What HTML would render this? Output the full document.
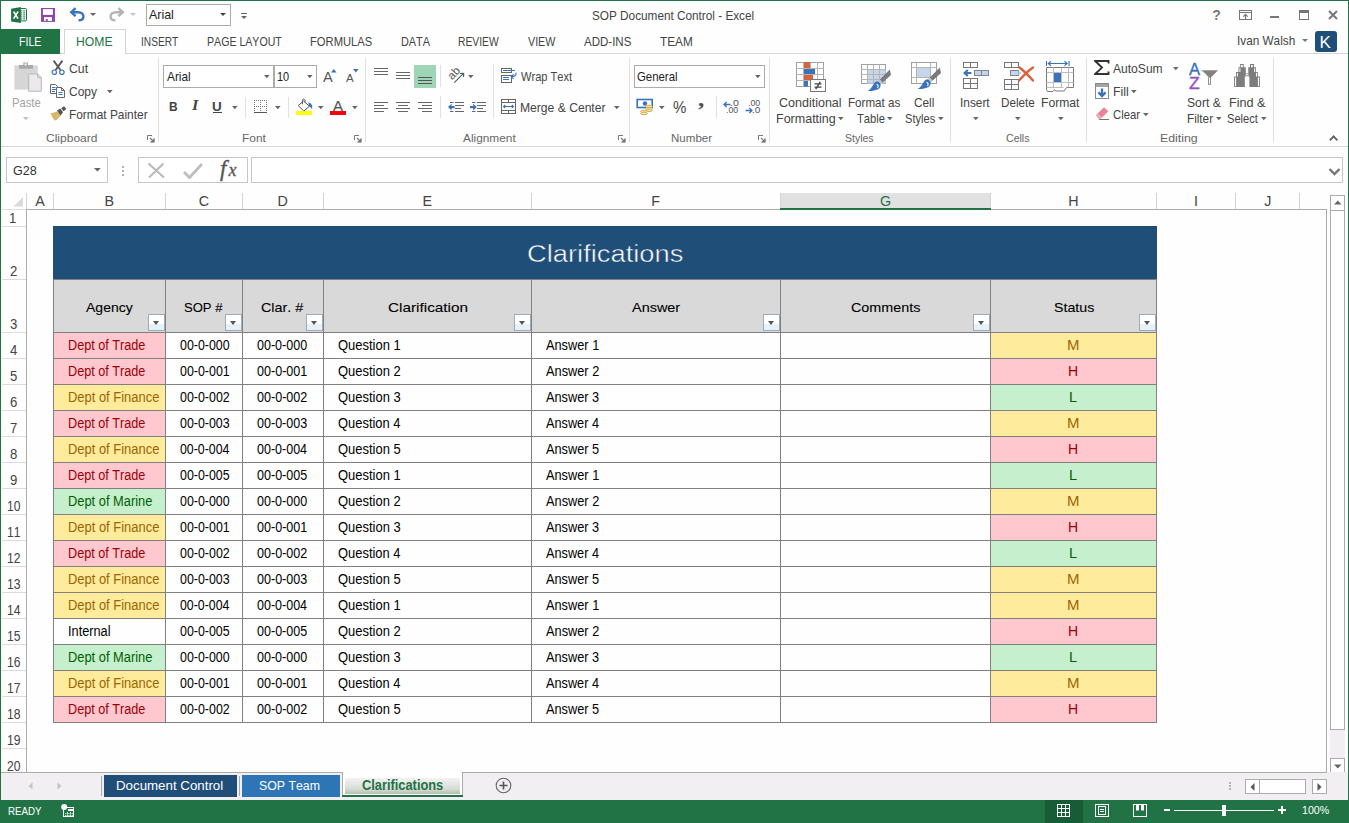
<!DOCTYPE html>
<html><head><meta charset="utf-8"><title>SOP Document Control - Excel</title>
<style>
*{box-sizing:border-box;margin:0;padding:0}
html,body{width:1349px;height:823px;overflow:hidden;background:#fdfefd}
body{font-family:"Liberation Sans",sans-serif;font-size:12px;color:#444;position:relative}
.a{position:absolute}
.t{position:absolute;white-space:nowrap;line-height:1;font-kerning:none}
#frame{left:0;top:0;width:1349px;height:823px;border-top:1px solid #217346;border-left:1px solid #217346;border-right:1px solid #217346;z-index:50}
.dd{position:absolute;width:0;height:0;border-left:3px solid transparent;border-right:3px solid transparent;border-top:3px solid #666}
.fb{position:absolute;top:314px;width:17px;height:17px;background:linear-gradient(#fff 58%,#e6f2fb 58%);border:1px solid #a3abb2}
.fb:after{content:"";position:absolute;left:4px;top:6px;border-left:3.5px solid transparent;border-right:3.5px solid transparent;border-top:4px solid #555}

</style></head><body>
<div id="frame" class="a"></div>
<div id="titlebar">
<svg class="a" style="left:11px;top:7px" width="17" height="17" viewBox="0 0 17 17">
<rect x="8.5" y="1.5" width="7" height="12.4" rx="1" fill="#fff" stroke="#217346" stroke-width="1"/>
<path d="M10 3.9h1.3M10 5.9h1.3M10 7.9h1.3M10 9.9h1.3M10 11.9h1.3M12.2 3.9h2M12.2 5.9h2M12.2 7.9h2M12.2 9.9h2M12.2 11.9h2" stroke="#217346" stroke-width="1" fill="none"/>
<path d="M0.1 1.7L9.9 0.1V15.9L0.1 14.6Z" fill="#217346"/>
<path d="M2.7 4.6L7 11.6M7 4.6L2.7 11.6" stroke="#fff" stroke-width="1.7" fill="none"/>
</svg>
<svg class="a" style="left:41px;top:8px" width="14" height="14" viewBox="0 0 14 14">
<rect x="0" y="0" width="14" height="13.9" fill="#8a48a8"/>
<rect x="1.9" y="1.1" width="10" height="5.8" fill="#fff"/>
<rect x="3" y="9.1" width="8" height="3.8" fill="#fff"/>
<rect x="4.8" y="11.1" width="2" height="1.8" fill="#8a48a8"/>
</svg>
<svg class="a" style="left:69px;top:7px" width="17" height="15" viewBox="0 0 17 15">
<path d="M2.2 5.2 H9.2 C12.6 5.2 14.4 7.2 14.4 9.4 C14.4 11.6 12.6 13.2 9.6 13.2" fill="none" stroke="#3a73ba" stroke-width="2.4"/>
<path d="M6.6 1.2 L2.2 5.2 L6.6 9.2" fill="none" stroke="#3a73ba" stroke-width="2.4"/>
</svg>
<div class="dd" style="left:90px;top:13px;border-top-color:#666"></div>
<svg class="a" style="left:108px;top:7px" width="17" height="15" viewBox="0 0 17 15">
<g transform="translate(17,0) scale(-1,1)">
<path d="M2.2 5.2 H9.2 C12.6 5.2 14.4 7.2 14.4 9.4 C14.4 11.6 12.6 13.2 9.6 13.2" fill="none" stroke="#b4b4b4" stroke-width="2.4"/>
<path d="M6.6 1.2 L2.2 5.2 L6.6 9.2" fill="none" stroke="#b4b4b4" stroke-width="2.4"/>
</g></svg>
<div class="dd" style="left:130px;top:13px;border-top-color:#c4c4c4"></div>
<div class="a" style="left:146px;top:4px;width:85px;height:22px;border:1px solid #ababab;background:#fff"></div>
<div class="t" style="left:148.98px;top:8px;font-size:13.2px;color:#222;transform:scaleX(0.9413);transform-origin:0 0;">Arial</div>
<div class="dd" style="left:220px;top:13px;border-top-color:#444"></div>
<div class="a" style="left:241px;top:13px;width:6px;height:1px;background:#666"></div>
<div class="dd" style="left:241px;top:16px;border-top-color:#666"></div>
<div class="t" style="left:592.47px;top:10px;font-size:12.7px;color:#444;transform:scaleX(0.9273);transform-origin:0 0;">SOP Document Control - Excel</div>
<div class="t" style="left:1212.36px;top:8px;font-size:14px;color:#777;font-weight:bold;">?</div>
<svg class="a" style="left:1239px;top:10px" width="13" height="10" viewBox="0 0 13 10">
<rect x="0.5" y="0.5" width="12" height="9" fill="none" stroke="#777"/>
<path d="M0.5 2.5H12.5" stroke="#777"/>
<path d="M6.5 9V4.4M4.3 6.6L6.5 4.4L8.7 6.6" fill="none" stroke="#777" stroke-width="1.2"/>
</svg>
<div class="a" style="left:1270px;top:16px;width:9px;height:2px;background:#777"></div>
<div class="a" style="left:1299px;top:10px;width:10px;height:10px;border:1px solid #777;border-top-width:3px"></div>
<svg class="a" style="left:1328px;top:10px" width="10" height="10" viewBox="0 0 10 10">
<path d="M1 1L9 9M9 1L1 9" stroke="#777" stroke-width="2" fill="none"/></svg>
<div class="a" style="left:1px;top:29px;width:59px;height:25px;background:#217346"></div>
<div class="a" style="left:1px;top:53px;width:1347px;height:1px;background:#d5d5d5"></div>
<div class="a" style="left:1px;top:53px;width:59px;height:1px;background:#217346"></div>
<div class="a" style="left:64px;top:29px;width:62px;height:25px;background:#fff;border:1px solid #d5d5d5;border-bottom:0"></div>
<div class="t" style="left:19.13px;top:35px;font-size:13px;color:#fff;transform:scaleX(0.8131);transform-origin:0 0;">FILE</div>
<div class="t" style="left:76.00px;top:35px;font-size:13px;color:#217346;transform:scaleX(0.9365);transform-origin:0 0;">HOME</div>
<div class="t" style="left:140.56px;top:35px;font-size:13px;color:#444;transform:scaleX(0.7797);transform-origin:0 0;">INSERT</div>
<div class="t" style="left:206.63px;top:35px;font-size:13px;color:#444;transform:scaleX(0.8154);transform-origin:0 0;">PAGE LAYOUT</div>
<div class="t" style="left:310.48px;top:35px;font-size:13px;color:#444;transform:scaleX(0.8616);transform-origin:0 0;">FORMULAS</div>
<div class="t" style="left:400.71px;top:35px;font-size:13px;color:#444;transform:scaleX(0.8368);transform-origin:0 0;">DATA</div>
<div class="t" style="left:458.45px;top:35px;font-size:13px;color:#444;transform:scaleX(0.7933);transform-origin:0 0;">REVIEW</div>
<div class="t" style="left:527.75px;top:35px;font-size:13px;color:#444;transform:scaleX(0.8242);transform-origin:0 0;">VIEW</div>
<div class="t" style="left:584.38px;top:35px;font-size:13px;color:#444;transform:scaleX(0.8859);transform-origin:0 0;">ADD-INS</div>
<div class="t" style="left:660.04px;top:35px;font-size:13px;color:#444;transform:scaleX(0.9064);transform-origin:0 0;">TEAM</div>
<div class="t" style="left:1237.21px;top:35px;font-size:12.2px;color:#444;transform:scaleX(0.9653);transform-origin:0 0;">Ivan Walsh</div>
<div class="dd" style="left:1302px;top:39px;border-top-color:#777"></div>
<div class="a" style="left:1315px;top:31px;width:22px;height:21px;background:#1f4e79;border-radius:3px"></div>
<div class="t" style="left:1319.61px;top:34px;font-size:17px;color:#fff;">K</div>
</div>
<div id="ribbon">
<div class="a" style="left:1px;top:146px;width:1347px;height:1px;background:#d5d5d5"></div>
<div class="a" style="left:158px;top:58px;width:1px;height:84px;background:#e1e1e1"></div>
<div class="a" style="left:365px;top:58px;width:1px;height:84px;background:#e1e1e1"></div>
<div class="a" style="left:629px;top:58px;width:1px;height:84px;background:#e1e1e1"></div>
<div class="a" style="left:769px;top:58px;width:1px;height:84px;background:#e1e1e1"></div>
<div class="a" style="left:950px;top:58px;width:1px;height:84px;background:#e1e1e1"></div>
<div class="a" style="left:1086px;top:58px;width:1px;height:84px;background:#e1e1e1"></div>
<div class="a" style="left:1273px;top:58px;width:1px;height:84px;background:#e1e1e1"></div>
<div class="t" style="left:45.99px;top:133px;font-size:11.4px;color:#666;transform:scaleX(1.0551);transform-origin:0 0;">Clipboard</div>
<div class="t" style="left:241.92px;top:133px;font-size:11.4px;color:#666;transform:scaleX(1.0462);transform-origin:0 0;">Font</div>
<div class="t" style="left:462.98px;top:133px;font-size:11.4px;color:#666;transform:scaleX(1.0398);transform-origin:0 0;">Alignment</div>
<div class="t" style="left:670.85px;top:133px;font-size:11.4px;color:#666;transform:scaleX(1.0147);transform-origin:0 0;">Number</div>
<div class="t" style="left:845.12px;top:133px;font-size:11.4px;color:#666;transform:scaleX(0.9198);transform-origin:0 0;">Styles</div>
<div class="t" style="left:1006.16px;top:133px;font-size:11.4px;color:#666;transform:scaleX(0.9282);transform-origin:0 0;">Cells</div>
<div class="t" style="left:1160.49px;top:133px;font-size:11.4px;color:#666;transform:scaleX(1.0818);transform-origin:0 0;">Editing</div>
<svg class="a" style="left:147px;top:135px" width="8" height="8" viewBox="0 0 8 8"><path d="M0.5 5V0.5H5" fill="none" stroke="#777"/><path d="M3 3L7 7M7 3.6V7H3.6" fill="none" stroke="#777" stroke-width="1.1"/><path d="M7.3 3.2V7.3H3.2Z" fill="#777"/></svg>
<svg class="a" style="left:354px;top:135px" width="8" height="8" viewBox="0 0 8 8"><path d="M0.5 5V0.5H5" fill="none" stroke="#777"/><path d="M3 3L7 7M7 3.6V7H3.6" fill="none" stroke="#777" stroke-width="1.1"/><path d="M7.3 3.2V7.3H3.2Z" fill="#777"/></svg>
<svg class="a" style="left:618px;top:135px" width="8" height="8" viewBox="0 0 8 8"><path d="M0.5 5V0.5H5" fill="none" stroke="#777"/><path d="M3 3L7 7M7 3.6V7H3.6" fill="none" stroke="#777" stroke-width="1.1"/><path d="M7.3 3.2V7.3H3.2Z" fill="#777"/></svg>
<svg class="a" style="left:758px;top:135px" width="8" height="8" viewBox="0 0 8 8"><path d="M0.5 5V0.5H5" fill="none" stroke="#777"/><path d="M3 3L7 7M7 3.6V7H3.6" fill="none" stroke="#777" stroke-width="1.1"/><path d="M7.3 3.2V7.3H3.2Z" fill="#777"/></svg>
<svg class="a" style="left:1329px;top:134px" width="10" height="8" viewBox="0 0 10 8"><path d="M0.8 6.4L4.6 2.4L8.4 6.4" fill="none" stroke="#666" stroke-width="2"/></svg>
<svg class="a" style="left:13px;top:61px" width="30" height="32" viewBox="0 0 30 32">
<rect x="1.4" y="4.4" width="23.4" height="24.2" fill="#d6d6d6"/>
<path d="M6 4H10.3V1.4H15V4H20V7.8H6Z" fill="#a9a9a9"/>
<rect x="11.4" y="2.4" width="2.6" height="2" fill="#e8e8e8"/>
<path d="M15.7 12.9H24.6L28.3 16.6V30.2H15.7Z" fill="#ebe8ee" stroke="#b8b8b8" stroke-width="1"/>
<path d="M24.6 12.9V16.6H28.3" fill="none" stroke="#b8b8b8" stroke-width="1"/>
</svg>
<div class="t" style="left:11.88px;top:97px;font-size:12.2px;color:#a6a6a6;transform:scaleX(0.9206);transform-origin:0 0;">Paste</div>
<svg class="a" style="left:23px;top:117px" width="6" height="4"><path d="M0 0H5.6L2.8 3.3Z" fill="#c0c0c0"/></svg>
<svg class="a" style="left:50px;top:60px" width="16" height="16" viewBox="0 0 16 16">
<path d="M3.6 0.6L10.4 10M12.4 0.6L5.6 10" stroke="#585858" stroke-width="1.9" fill="none"/>
<circle cx="4.3" cy="12.2" r="2.2" fill="#fff" stroke="#3a73ba" stroke-width="1.2"/>
<circle cx="11.9" cy="12.2" r="2.2" fill="#fff" stroke="#3a73ba" stroke-width="1.2"/>
</svg>
<div class="t" style="left:68.98px;top:63px;font-size:12.2px;color:#444;transform:scaleX(1.0068);transform-origin:0 0;">Cut</div>
<svg class="a" style="left:49px;top:84px" width="17" height="15" viewBox="0 0 17 15">
<path d="M1.5 0.5H6.5L8.5 2.5V9.5H1.5Z" fill="#fff" stroke="#666"/>
<path d="M3 3.5H6.5M3 5.5H7M3 7.5H6" stroke="#3a73ba"/>
<path d="M7.5 3.5H12.5L15.5 6.5V13.5H7.5Z" fill="#fff" stroke="#666"/>
<path d="M12.5 3.5V6.5H15.5" fill="none" stroke="#666"/>
<path d="M9.5 8.5H13.5M9.5 10.5H13.5" stroke="#3a73ba"/>
</svg>
<div class="t" style="left:68.99px;top:86px;font-size:12.2px;color:#444;transform:scaleX(0.9843);transform-origin:0 0;">Copy</div>
<svg class="a" style="left:107px;top:90px" width="6" height="4"><path d="M0 0H5.6L2.8 3.3Z" fill="#666"/></svg>
<svg class="a" style="left:50px;top:106px" width="17" height="15" viewBox="0 0 17 15">
<path d="M0.5 7.5L8 5.2L11 9.2L6.5 14.3L4.2 14.3Z" fill="#d8b66b"/>
<path d="M7 4.6L10.3 2.6L13 6.2L10.6 9.4Z" fill="#555"/>
<path d="M11.2 2.3L14 0.3L16.3 3L13.6 5.3Z" fill="#555"/>
</svg>
<div class="t" style="left:68.62px;top:109px;font-size:12.2px;color:#444;transform:scaleX(0.9751);transform-origin:0 0;">Format Painter</div>
<div class="a" style="left:163px;top:65px;width:111px;height:23px;border:1px solid #ababab;background:#fff"></div>
<div class="a" style="left:274px;top:65px;width:43px;height:23px;border:1px solid #ababab;background:#fff"></div>
<div class="t" style="left:166.58px;top:71px;font-size:12.6px;color:#222;transform:scaleX(0.9409);transform-origin:0 0;">Arial</div>
<svg class="a" style="left:264px;top:75px" width="6" height="4"><path d="M0 0H5.6L2.8 3.3Z" fill="#666"/></svg>
<div class="t" style="left:277.37px;top:71px;font-size:12.6px;color:#222;transform:scaleX(0.8676);transform-origin:0 0;">10</div>
<svg class="a" style="left:307px;top:75px" width="6" height="4"><path d="M0 0H5.6L2.8 3.3Z" fill="#666"/></svg>
<div class="t" style="left:323.27px;top:70px;font-size:14px;color:#555;transform:scaleX(1.0449);transform-origin:0 0;">A</div>
<svg class="a" style="left:331px;top:69px" width="6" height="4"><path d="M0 3.4L2.8 0L5.6 3.4Z" fill="#3a73ba"/></svg>
<div class="t" style="left:346.08px;top:73px;font-size:11px;color:#555;transform:scaleX(1.0557);transform-origin:0 0;">A</div>
<svg class="a" style="left:353px;top:69px" width="6" height="4"><path d="M0 0H5.6L2.8 3.4Z" fill="#3a73ba"/></svg>
<div class="t" style="left:168.90px;top:101px;font-size:12.6px;color:#444;transform:scaleX(0.9500);transform-origin:0 0;font-weight:bold;">B</div>
<div class="t" style="left:192.16px;top:99px;font-size:14px;color:#444;transform:scaleX(1.1703);transform-origin:0 0;font-weight:bold;font-style:italic;font-family:'Liberation Serif',serif;">I</div>
<div class="t" style="left:212.49px;top:101px;font-size:12.4px;color:#444;transform:scaleX(1.0868);transform-origin:0 0;font-weight:bold;">U</div>
<div class="a" style="left:213px;top:112px;width:9px;height:1px;background:#444"></div>
<svg class="a" style="left:232px;top:106px" width="6" height="4"><path d="M0 0H5.6L2.8 3.3Z" fill="#666"/></svg>
<div class="a" style="left:245px;top:97px;width:1px;height:21px;background:#e1e1e1"></div>
<svg class="a" style="left:254px;top:100px" width="14" height="14" viewBox="0 0 14 14" shape-rendering="crispEdges">
<path d="M0 0.5H13M0 6.5H13M0.5 0V12M6.5 0V12M12.5 0V12" stroke="#777" stroke-width="1" stroke-dasharray="1 1" fill="none"/>
<path d="M0 12.5H13" stroke="#555" stroke-width="1"/></svg>
<svg class="a" style="left:275px;top:106px" width="6" height="4"><path d="M0 0H5.6L2.8 3.3Z" fill="#666"/></svg>
<div class="a" style="left:288px;top:97px;width:1px;height:21px;background:#e1e1e1"></div>
<svg class="a" style="left:296px;top:98px" width="18" height="18" viewBox="0 0 18 18">
<path d="M7.6 3L13.4 8.2L7.8 13L2.2 7.6Z" fill="#fff" stroke="#555" stroke-width="1"/>
<path d="M6.4 6.2V2.4C6.4 0.6 9 0.6 9 2.4V4.2" fill="none" stroke="#555" stroke-width="1"/>
<path d="M12.2 4.6C15.4 5 17 7.6 16 11.4C15.2 9.6 14.4 8.8 13.2 8.2Z" fill="#3a73ba"/>
<rect x="0" y="13" width="16" height="4" fill="#ffff00"/></svg>
<svg class="a" style="left:318px;top:106px" width="6" height="4"><path d="M0 0H5.6L2.8 3.3Z" fill="#666"/></svg>
<div class="t" style="left:333.37px;top:99px;font-size:14.6px;color:#555;transform:scaleX(1.0226);transform-origin:0 0;-webkit-text-stroke:0.2px #555;">A</div>
<div class="a" style="left:330px;top:111px;width:16px;height:4px;background:#f5000f"></div>
<svg class="a" style="left:352px;top:106px" width="6" height="4"><path d="M0 0H5.6L2.8 3.3Z" fill="#666"/></svg>
<div class="a" style="left:374px;top:68px;width:14px;height:1px;background:#666"></div><div class="a" style="left:374px;top:71px;width:14px;height:1px;background:#666"></div><div class="a" style="left:374px;top:74px;width:14px;height:1px;background:#666"></div>
<div class="a" style="left:396px;top:72px;width:14px;height:1px;background:#666"></div><div class="a" style="left:396px;top:75px;width:14px;height:1px;background:#666"></div><div class="a" style="left:396px;top:78px;width:14px;height:1px;background:#666"></div>
<div class="a" style="left:414px;top:65px;width:22px;height:23px;background:#9fd5b7"></div>
<div class="a" style="left:418px;top:77px;width:14px;height:1px;background:#555"></div><div class="a" style="left:418px;top:80px;width:14px;height:1px;background:#555"></div><div class="a" style="left:418px;top:83px;width:14px;height:1px;background:#555"></div>
<div class="a" style="left:440px;top:65px;width:1px;height:22px;background:#e1e1e1"></div>
<svg class="a" style="left:447px;top:66px" width="19" height="19" viewBox="0 0 19 19">
<path d="M7.2 16.6L16.6 7.4M16.8 7.2L13 7.5M16.8 7.2L16.5 11" stroke="#4a5a5a" stroke-width="1.1" fill="none"/>
<text transform="translate(5.2,14.4) rotate(-47)" font-family="Liberation Sans" font-size="11.5" fill="#555">ab</text>
</svg>
<svg class="a" style="left:468px;top:75px" width="6" height="4"><path d="M0 0H5.6L2.8 3.3Z" fill="#666"/></svg>
<div class="a" style="left:493px;top:64px;width:1px;height:54px;background:#e1e1e1"></div>
<svg class="a" style="left:501px;top:68px" width="17" height="16" viewBox="0 0 17 16">
<rect x="0.5" y="0.5" width="10" height="4" fill="#fff" stroke="#666"/>
<rect x="0.5" y="7.5" width="10" height="7" fill="#fff" stroke="#666"/>
<path d="M2 2.5H14M2 9.5H8M2 11.5H8" stroke="#3a73ba"/>
<path d="M15 4.6C15.4 7.6 13.6 8.6 10.6 8.6M12.6 6.4L10.2 8.6L12.6 10.8" fill="none" stroke="#3a73ba" stroke-width="1.1"/>
</svg>
<div class="t" style="left:520.55px;top:71px;font-size:12.2px;color:#444;transform:scaleX(0.9087);transform-origin:0 0;">Wrap Text</div>
<div class="a" style="left:374px;top:102px;width:14px;height:1px;background:#666"></div><div class="a" style="left:374px;top:105px;width:10px;height:1px;background:#666"></div><div class="a" style="left:374px;top:108px;width:14px;height:1px;background:#666"></div><div class="a" style="left:374px;top:111px;width:10px;height:1px;background:#666"></div>
<div class="a" style="left:396.0px;top:102px;width:14px;height:1px;background:#666"></div><div class="a" style="left:398.0px;top:105px;width:10px;height:1px;background:#666"></div><div class="a" style="left:396.0px;top:108px;width:14px;height:1px;background:#666"></div><div class="a" style="left:398.0px;top:111px;width:10px;height:1px;background:#666"></div>
<div class="a" style="left:418px;top:102px;width:14px;height:1px;background:#666"></div><div class="a" style="left:422px;top:105px;width:10px;height:1px;background:#666"></div><div class="a" style="left:418px;top:108px;width:14px;height:1px;background:#666"></div><div class="a" style="left:422px;top:111px;width:10px;height:1px;background:#666"></div>
<div class="a" style="left:440px;top:96px;width:1px;height:22px;background:#e1e1e1"></div>
<svg class="a" style="left:448px;top:101px" width="17" height="12" viewBox="0 0 17 12">
<path d="M2 1.5H5.5M7 1.5H16M7 4.5H16M7 7.5H13M2 10.5H5.5M7 10.5H16" stroke="#666"/>
<path d="M0 6.1L3.6 2.8V5H6.6V7.2H3.6V9.4Z" fill="#3a73ba"/></svg>
<svg class="a" style="left:470px;top:101px" width="17" height="12" viewBox="0 0 17 12">
<path d="M2 1.5H5.5M7 1.5H16M7 4.5H16M7 7.5H13M2 10.5H5.5M7 10.5H16" stroke="#666"/>
<path d="M6.8 6.1L3.2 2.8V5H0V7.2H3.2V9.4Z" fill="#3a73ba"/></svg>
<svg class="a" style="left:501px;top:99px" width="16" height="16" viewBox="0 0 16 16">
<rect x="0.5" y="0.5" width="14" height="14" fill="#fff" stroke="#666"/>
<path d="M0.5 3.5H14.5M0.5 11.5H14.5M7.5 0.5V3.5M7.5 11.5V14.5" stroke="#666" fill="none"/>
<path d="M2.5 7.5H12.5M4.3 5.8L2.5 7.5L4.3 9.2M10.7 5.8L12.5 7.5L10.7 9.2" stroke="#3a73ba" stroke-width="1.1" fill="none"/>
</svg>
<div class="t" style="left:519.61px;top:102px;font-size:12.2px;color:#444;transform:scaleX(0.9940);transform-origin:0 0;">Merge &amp; Center</div>
<svg class="a" style="left:614px;top:106px" width="6" height="4"><path d="M0 0H5.6L2.8 3.3Z" fill="#666"/></svg>
<div class="a" style="left:634px;top:65px;width:131px;height:23px;border:1px solid #ababab;background:#fff"></div>
<div class="t" style="left:637.13px;top:71px;font-size:12.6px;color:#222;transform:scaleX(0.9043);transform-origin:0 0;">General</div>
<svg class="a" style="left:754.5px;top:75px" width="6" height="4"><path d="M0 0H5.6L2.8 3.3Z" fill="#666"/></svg>
<svg class="a" style="left:636px;top:98px" width="18" height="18" viewBox="0 0 18 18">
<rect x="1.2" y="1.5" width="15" height="8" fill="#fff" stroke="#3a73ba" stroke-width="1.6"/>
<circle cx="9" cy="5.5" r="2.2" fill="#3a73ba"/>
<ellipse cx="13" cy="8.5" rx="3.4" ry="1.3" fill="#f6e3b0" stroke="#d2a84a" stroke-width="0.9"/>
<ellipse cx="13" cy="10.5" rx="3.4" ry="1.3" fill="#f6e3b0" stroke="#d2a84a" stroke-width="0.9"/>
<ellipse cx="13" cy="12.3" rx="3.4" ry="1.3" fill="#f6e3b0" stroke="#d2a84a" stroke-width="0.9"/>
<ellipse cx="8" cy="13.4" rx="3.4" ry="1.3" fill="#f6e3b0" stroke="#d2a84a" stroke-width="0.9"/>
<ellipse cx="8" cy="15.4" rx="3.4" ry="1.3" fill="#f6e3b0" stroke="#d2a84a" stroke-width="0.9"/>
</svg>
<svg class="a" style="left:659px;top:106px" width="6" height="4"><path d="M0 0H5.6L2.8 3.3Z" fill="#666"/></svg>
<div class="t" style="left:672.96px;top:100px;font-size:16.6px;color:#484848;transform:scaleX(0.9060);transform-origin:0 0;">%</div>
<div class="t" style="left:697.67px;top:89px;font-size:20px;color:#505050;transform:scaleX(1.2580);transform-origin:0 0;font-weight:bold;font-family:'Liberation Serif',serif;">,</div>
<div class="a" style="left:716px;top:96px;width:1px;height:22px;background:#e1e1e1"></div>
<svg class="a" style="left:723px;top:101px" width="8" height="7" viewBox="0 0 8 7"><path d="M7.5 3.5H1.2M3.6 1L1 3.5L3.6 6" fill="none" stroke="#3a73ba" stroke-width="1.3"/></svg>
<div class="t" style="left:729.53px;top:99px;font-size:9px;color:#555;transform:scaleX(1.1844);transform-origin:0 0;">.0</div>
<div class="t" style="left:726.20px;top:106px;font-size:9px;color:#555;transform:scaleX(0.9702);transform-origin:0 0;">.00</div>
<div class="t" style="left:748.20px;top:99px;font-size:9px;color:#555;transform:scaleX(0.9702);transform-origin:0 0;">.00</div>
<svg class="a" style="left:745px;top:107px" width="8" height="7" viewBox="0 0 8 7"><path d="M0.5 3.5H6.8M4.4 1L7 3.5L4.4 6" fill="none" stroke="#3a73ba" stroke-width="1.3"/></svg>
<div class="t" style="left:752.09px;top:106px;font-size:9px;color:#555;transform:scaleX(1.1054);transform-origin:0 0;">.0</div>
<svg class="a" style="left:796px;top:62px" width="31" height="30" viewBox="0 0 31 30">
<rect x="0.5" y="0.5" width="27" height="24" fill="#fff" stroke="#a0a0a0"/>
<path d="M0.5 6.5H27.5M0.5 12.5H27.5M0.5 18.5H27.5M7.5 0.5V24.5M14.5 0.5V24.5M21.5 0.5V24.5" stroke="#b4b4b4" fill="none"/>
<rect x="8" y="0" width="6" height="6" fill="#d9623a"/>
<rect x="8" y="7" width="11" height="5" fill="#3a73ba"/>
<rect x="8" y="13" width="9" height="5" fill="#d9623a"/>
<rect x="8" y="19" width="4" height="5.5" fill="#3a73ba"/>
<rect x="14.5" y="17.5" width="15" height="12" fill="#fff" stroke="#777"/>
<path d="M18.5 21.8H25.5M18.5 25.2H25.5M24.3 19.8L19.7 27.2" stroke="#444" stroke-width="1.3"/>
</svg>
<div class="t" style="left:778.76px;top:97px;font-size:12.2px;color:#444;transform:scaleX(1.0267);transform-origin:0 0;">Conditional</div>
<div class="t" style="left:775.57px;top:113px;font-size:12.2px;color:#444;transform:scaleX(1.0262);transform-origin:0 0;">Formatting</div>
<svg class="a" style="left:838px;top:117px" width="6" height="4"><path d="M0 0H5.6L2.8 3.3Z" fill="#666"/></svg>
<svg class="a" style="left:861px;top:64px" width="31" height="29" viewBox="0 0 31 29">
<rect x="0.5" y="0.5" width="24" height="19" fill="#fff" stroke="#a0a0a0"/>
<rect x="6.5" y="5.5" width="18" height="14" fill="#c5d5ea"/>
<path d="M0.5 5.5H24.5M0.5 10.5H24.5M0.5 15.5H24.5M6.5 0.5V19.5M12.5 0.5V19.5M18.5 0.5V19.5" stroke="#b4b4b4" fill="none"/>
<path d="M28.8 5.4L30 11L20.6 19.6L17.8 16.4Z" fill="#7a7a7a"/>
<path d="M18.6 15.2L21.6 18.6L19 21L16 17.8Z" fill="#c8c8c8"/>
<path d="M16.4 17.6C19 18.2 20.4 20.2 19.2 23.2C17.6 26.4 11 27 6.6 27C10 25 11.4 22 13 19.4C14 17.8 15.2 17.4 16.4 17.6Z" fill="#3a73ba"/>
<path d="M15.6 20.4C17.4 20.8 17.6 22.6 16.4 23.8" stroke="#fff" stroke-width="1.1" fill="none"/>
</svg>
<div class="t" style="left:847.85px;top:97px;font-size:12.2px;color:#444;transform:scaleX(0.9538);transform-origin:0 0;">Format as</div>
<div class="t" style="left:856.55px;top:113px;font-size:12.2px;color:#444;transform:scaleX(0.9158);transform-origin:0 0;">Table</div>
<svg class="a" style="left:887.4px;top:117px" width="6" height="4"><path d="M0 0H5.6L2.8 3.3Z" fill="#666"/></svg>
<svg class="a" style="left:911px;top:62px" width="31" height="29" viewBox="0 0 31 29">
<rect x="0.5" y="0.5" width="25" height="21" fill="#fff" stroke="#a0a0a0"/>
<path d="M0.5 5.5H25.5M0.5 15.5H25.5M5.5 0.5V21.5M19.5 0.5V21.5" stroke="#b4b4b4" fill="none"/>
<rect x="6" y="6" width="13" height="9" fill="#c5d5ea"/>
<path d="M28.8 5.4L30 11L20.6 19.6L17.8 16.4Z" fill="#7a7a7a"/>
<path d="M18.6 15.2L21.6 18.6L19 21L16 17.8Z" fill="#c8c8c8"/>
<path d="M16.4 17.6C19 18.2 20.4 20.2 19.2 23.2C17.6 26.4 11 27 6.6 27C10 25 11.4 22 13 19.4C14 17.8 15.2 17.4 16.4 17.6Z" fill="#3a73ba"/>
<path d="M15.6 20.4C17.4 20.8 17.6 22.6 16.4 23.8" stroke="#fff" stroke-width="1.1" fill="none"/>
</svg>
<div class="t" style="left:914.00px;top:97px;font-size:12.2px;color:#444;transform:scaleX(0.9703);transform-origin:0 0;">Cell</div>
<div class="t" style="left:904.90px;top:113px;font-size:12.2px;color:#444;transform:scaleX(0.9092);transform-origin:0 0;">Styles</div>
<svg class="a" style="left:938px;top:117px" width="6" height="4"><path d="M0 0H5.6L2.8 3.3Z" fill="#666"/></svg>
<svg class="a" style="left:963px;top:62px" width="27" height="28" viewBox="0 0 27 28">
<rect x="0.5" y="0.5" width="14" height="5" fill="#fff" stroke="#777"/><path d="M7.5 0.5V5.5" stroke="#777"/>
<rect x="11.5" y="8.5" width="14" height="5" fill="#c5d5ea" stroke="#7d8590"/><path d="M18.5 8.5V13.5" stroke="#7d8590"/>
<path d="M8.4 11H2M4.8 8L1.6 11L4.8 14" fill="none" stroke="#3a73ba" stroke-width="2.1"/>
<rect x="0.5" y="16.5" width="14" height="10" fill="#fff" stroke="#777"/><path d="M7.5 16.5V26.5M0.5 21.5H14.5" stroke="#777"/>
</svg>
<div class="t" style="left:960.30px;top:97px;font-size:12.2px;color:#444;transform:scaleX(0.9728);transform-origin:0 0;">Insert</div>
<svg class="a" style="left:973px;top:117px" width="6" height="4"><path d="M0 0H5.6L2.8 3.3Z" fill="#666"/></svg>
<svg class="a" style="left:1004px;top:62px" width="31" height="29" viewBox="0 0 31 29">
<rect x="0.5" y="0.5" width="14" height="5" fill="#fff" stroke="#777"/><path d="M7.5 0.5V5.5" stroke="#777"/>
<rect x="6.5" y="8.5" width="8" height="5" fill="#c5d5ea" stroke="#7d8590"/>
<path d="M14.5 8.5L18 11L14.5 13.5Z" fill="#c5d5ea"/>
<rect x="0.5" y="17.5" width="14" height="10" fill="#fff" stroke="#777"/><path d="M7.5 17.5V27.5M0.5 22.5H14.5" stroke="#777"/>
<path d="M15.5 5.5C20 9 24 13 29 18.5M29 5.5C24 9 20 13 15 18.5" stroke="#d9623a" stroke-width="2.4" stroke-linecap="round" fill="none"/>
</svg>
<div class="t" style="left:1000.74px;top:97px;font-size:12.2px;color:#444;transform:scaleX(0.9578);transform-origin:0 0;">Delete</div>
<svg class="a" style="left:1015px;top:117px" width="6" height="4"><path d="M0 0H5.6L2.8 3.3Z" fill="#666"/></svg>
<svg class="a" style="left:1046px;top:60px" width="29" height="33" viewBox="0 0 29 33">
<path d="M0.5 1V6M23 1V6M2.5 3.5H21M5 1.3L2.3 3.5L5 5.7M18.5 1.3L21.2 3.5L18.5 5.7" stroke="#3a73ba" stroke-width="1.1" fill="none"/>
<path d="M0.5 7.5H27.5V27.5H20.5L18 31H9.5L8.5 29.5L7 31.5H1.5L0.5 29.5Z" fill="#fff" stroke="#7c7c7c"/>
<path d="M0.5 12.5H27.5M0.5 22.5H27.5M0.5 27.5H17.5M7.5 7.5V27.5M15.5 7.5V27.5M22.5 7.5V27.5" stroke="#bdbdbd" fill="none"/>
<rect x="8" y="13" width="7" height="9" fill="#3a73ba"/>
</svg>
<div class="t" style="left:1040.60px;top:97px;font-size:12.2px;color:#444;transform:scaleX(0.9961);transform-origin:0 0;">Format</div>
<svg class="a" style="left:1057.5px;top:117px" width="6" height="4"><path d="M0 0H5.6L2.8 3.3Z" fill="#666"/></svg>
<svg class="a" style="left:1094px;top:60px" width="16" height="16" viewBox="0 0 16 16"><path d="M14.5 3.4V1H1.2L8 7.6L1.2 14H14.5V11.6" fill="none" stroke="#333" stroke-width="1.9" stroke-linejoin="miter"/></svg>
<div class="t" style="left:1113.38px;top:63px;font-size:12.2px;color:#444;transform:scaleX(0.9908);transform-origin:0 0;">AutoSum</div>
<svg class="a" style="left:1173px;top:67px" width="6" height="4"><path d="M0 0H5.6L2.8 3.3Z" fill="#666"/></svg>
<svg class="a" style="left:1095px;top:83px" width="15" height="17" viewBox="0 0 15 17">
<rect x="0.5" y="0.5" width="13" height="15" fill="#fff" stroke="#8a8a8a"/>
<rect x="1" y="1" width="12" height="3" fill="#a4a4a4"/>
<path d="M7 5.5V12.6M3.4 9.4L7 13L10.6 9.4" fill="none" stroke="#3a73ba" stroke-width="2.3"/>
</svg>
<div class="t" style="left:1112.68px;top:86px;font-size:12.2px;color:#444;transform:scaleX(1.0169);transform-origin:0 0;">Fill</div>
<svg class="a" style="left:1131px;top:90px" width="6" height="4"><path d="M0 0H5.6L2.8 3.3Z" fill="#666"/></svg>
<svg class="a" style="left:1095px;top:106px" width="15" height="15" viewBox="0 0 15 15">
<path d="M1 9L9 1.2L13.4 5.2L6 12.6L3.4 12.6Z" fill="#e98597"/>
<path d="M1 9L2.6 7.5L7.2 11.5L6 12.6L3.4 12.6Z" fill="#f3a9b6"/>
<path d="M4 13.5H14" stroke="#777"/>
</svg>
<div class="t" style="left:1113.12px;top:109px;font-size:12.2px;color:#444;transform:scaleX(0.9283);transform-origin:0 0;">Clear</div>
<svg class="a" style="left:1143px;top:113px" width="6" height="4"><path d="M0 0H5.6L2.8 3.3Z" fill="#666"/></svg>
<div class="t" style="left:1188.97px;top:62px;font-size:16px;color:#3a73ba;transform:scaleX(1.0368);transform-origin:0 0;-webkit-text-stroke:0.35px #3a73ba;">A</div>
<div class="t" style="left:1189.44px;top:76px;font-size:16px;color:#9b4fc4;transform:scaleX(1.0952);transform-origin:0 0;-webkit-text-stroke:0.35px #9b4fc4;">Z</div>
<svg class="a" style="left:1201px;top:70px" width="18" height="16" viewBox="0 0 18 16"><path d="M0.2 0.3H17L10 7.4V14.7H7V7.4Z" fill="#828282"/><path d="M7.9 7.8V13.8H9.1V7.8Z" fill="#fff"/><path d="M1.6 1.3L7.6 7.4" stroke="#fff" stroke-width="1"/></svg>
<div class="t" style="left:1186.75px;top:97px;font-size:12.2px;color:#444;transform:scaleX(0.9983);transform-origin:0 0;">Sort &amp;</div>
<div class="t" style="left:1186.84px;top:113px;font-size:12.2px;color:#444;transform:scaleX(0.9611);transform-origin:0 0;">Filter</div>
<svg class="a" style="left:1216px;top:117px" width="6" height="4"><path d="M0 0H5.6L2.8 3.3Z" fill="#666"/></svg>
<svg class="a" style="left:1233px;top:63px" width="29" height="25" viewBox="0 0 29 25">
<path d="M7.2 1.1H10.7V4.3H12.8V13.5H11.8V24H1V13.5H3V9H5.5V4.3H7.2Z" fill="#7c7c7c"/>
<path d="M17 1.1H21V4.3H23V9H24.8V13.5H27V24H16.4V13.5H15.3V4.3H17Z" fill="#7c7c7c"/>
<rect x="8.1" y="2" width="1.7" height="2.3" fill="#fff"/><rect x="18.1" y="2" width="1.7" height="2.3" fill="#fff"/>
<rect x="12.8" y="10.4" width="2.5" height="2.8" fill="#7c7c7c"/><rect x="12.8" y="11.2" width="2.5" height="1.2" fill="#fff"/>
<rect x="1.9" y="14.4" width="1.2" height="8.8" fill="#fff"/><rect x="24.9" y="14.4" width="1.2" height="8.8" fill="#fff"/>
<rect x="6.4" y="5.2" width="1" height="3.8" fill="#fff"/><rect x="21.2" y="5.2" width="1" height="3.8" fill="#fff"/>
<rect x="3.9" y="9.9" width="1" height="3.6" fill="#fff"/><rect x="23" y="9.9" width="1" height="3.6" fill="#fff"/>
</svg>
<div class="t" style="left:1228.67px;top:97px;font-size:12.2px;color:#444;transform:scaleX(1.0332);transform-origin:0 0;">Find &amp;</div>
<div class="t" style="left:1227.00px;top:113px;font-size:12.2px;color:#444;transform:scaleX(0.9109);transform-origin:0 0;">Select</div>
<svg class="a" style="left:1261px;top:117px" width="6" height="4"><path d="M0 0H5.6L2.8 3.3Z" fill="#666"/></svg>
</div>
<div id="fbar">
<div class="a" style="left:6px;top:157px;width:102px;height:26px;border:1px solid #c6c6c6;background:#fff"></div>
<div class="t" style="left:12.77px;top:165px;font-size:12.6px;color:#333;transform:scaleX(0.9985);transform-origin:0 0;">G28</div>
<svg class="a" style="left:94px;top:168px" width="7" height="4"><path d="M0 0H6.8L3.4 3.6Z" fill="#666"/></svg>
<div class="a" style="left:122px;top:166px;width:2px;height:2px;background:#b0b0b0"></div>
<div class="a" style="left:122px;top:170px;width:2px;height:2px;background:#b0b0b0"></div>
<div class="a" style="left:122px;top:174px;width:2px;height:2px;background:#b0b0b0"></div>
<div class="a" style="left:138px;top:157px;width:110px;height:26px;border:1px solid #c6c6c6;background:#fff"></div>
<svg class="a" style="left:147px;top:162px" width="19" height="17" viewBox="0 0 19 17"><path d="M1.5 1.5L17 15.5M16.5 1.5L2 15.5" stroke="#bababa" stroke-width="2.1" fill="none"/></svg>
<svg class="a" style="left:183px;top:162px" width="20" height="17" viewBox="0 0 20 17"><path d="M1 10L6.5 15.5L19 2" stroke="#bebebe" stroke-width="2.9" fill="none"/></svg>
<div class="t" style="left:220px;top:156px;font-family:'Liberation Serif',serif;font-style:italic;font-size:23px;line-height:25px;color:#555;-webkit-text-stroke:0.35px #555">f</div>
<div class="t" style="left:228.5px;top:160px;font-family:'Liberation Serif',serif;font-style:italic;font-size:18px;line-height:20px;color:#555;-webkit-text-stroke:0.3px #555">x</div>
<div class="a" style="left:251px;top:157px;width:1092px;height:26px;border:1px solid #c6c6c6;background:#fff"></div>
<svg class="a" style="left:1328px;top:167px" width="13" height="10" viewBox="0 0 13 10"><path d="M1.5 2L6.5 7L11.5 2" stroke="#777" stroke-width="2.4" fill="none"/></svg>
</div>
<div id="grid">
<div class="a" style="left:781px;top:193px;width:209px;height:16px;background:#e1e1e1"></div>
<div class="t" style="left:35.23px;top:194px;font-size:14.3px;color:#444;">A</div>
<div class="a" style="left:53px;top:193px;width:1px;height:16px;background:#d4d4d4"></div>
<div class="t" style="left:104.52px;top:194px;font-size:14.3px;color:#444;">B</div>
<div class="a" style="left:165px;top:193px;width:1px;height:16px;background:#d4d4d4"></div>
<div class="t" style="left:198.75px;top:194px;font-size:14.3px;color:#444;">C</div>
<div class="a" style="left:242px;top:193px;width:1px;height:16px;background:#d4d4d4"></div>
<div class="t" style="left:277.59px;top:194px;font-size:14.3px;color:#444;">D</div>
<div class="a" style="left:323px;top:193px;width:1px;height:16px;background:#d4d4d4"></div>
<div class="t" style="left:422.45px;top:194px;font-size:14.3px;color:#444;">E</div>
<div class="a" style="left:531px;top:193px;width:1px;height:16px;background:#d4d4d4"></div>
<div class="t" style="left:651.33px;top:194px;font-size:14.3px;color:#444;">F</div>
<div class="a" style="left:780px;top:193px;width:1px;height:16px;background:#d4d4d4"></div>
<div class="t" style="left:880.11px;top:194px;font-size:14.3px;color:#217346;">G</div>
<div class="a" style="left:990px;top:193px;width:1px;height:16px;background:#d4d4d4"></div>
<div class="t" style="left:1068.33px;top:194px;font-size:14.3px;color:#444;">H</div>
<div class="a" style="left:1156px;top:193px;width:1px;height:16px;background:#d4d4d4"></div>
<div class="t" style="left:1194.01px;top:194px;font-size:14.3px;color:#444;">I</div>
<div class="a" style="left:1235px;top:193px;width:1px;height:16px;background:#d4d4d4"></div>
<div class="t" style="left:1264.34px;top:194px;font-size:14.3px;color:#444;">J</div>
<div class="a" style="left:1299px;top:193px;width:1px;height:16px;background:#d4d4d4"></div>
<div class="a" style="left:26px;top:209px;width:1301px;height:1px;background:#ababab"></div>
<div class="a" style="left:26px;top:193px;width:1px;height:16px;background:#d4d4d4"></div>
<div class="a" style="left:26px;top:209px;width:1px;height:564px;background:#ababab"></div>
<div class="a" style="left:2px;top:209px;width:24px;height:1px;background:#dcdcdc"></div>
<div class="a" style="left:1326px;top:209px;width:1px;height:564px;background:#ababab"></div>
<div class="a" style="left:780px;top:208px;width:211px;height:2px;background:#217346"></div>
<svg class="a" style="left:8px;top:195px" width="16" height="14"><path d="M15 2V11.5H5.5Z" fill="#dadada"/></svg>
<div class="t" style="left:9.36px;top:211px;font-size:14.3px;color:#444;transform:scaleX(0.9200);transform-origin:0 0;">1</div>
<div class="a" style="left:2px;top:226px;width:24px;height:1px;background:#dcdcdc"></div>
<div class="t" style="left:9.54px;top:264px;font-size:14.3px;color:#444;transform:scaleX(0.9200);transform-origin:0 0;">2</div>
<div class="a" style="left:2px;top:279px;width:24px;height:1px;background:#dcdcdc"></div>
<div class="t" style="left:9.58px;top:317px;font-size:14.3px;color:#444;transform:scaleX(0.9200);transform-origin:0 0;">3</div>
<div class="a" style="left:2px;top:332px;width:24px;height:1px;background:#dcdcdc"></div>
<div class="t" style="left:9.58px;top:343px;font-size:14.3px;color:#444;transform:scaleX(0.9200);transform-origin:0 0;">4</div>
<div class="a" style="left:2px;top:358px;width:24px;height:1px;background:#dcdcdc"></div>
<div class="t" style="left:9.55px;top:369px;font-size:14.3px;color:#444;transform:scaleX(0.9200);transform-origin:0 0;">5</div>
<div class="a" style="left:2px;top:384px;width:24px;height:1px;background:#dcdcdc"></div>
<div class="t" style="left:9.50px;top:395px;font-size:14.3px;color:#444;transform:scaleX(0.9200);transform-origin:0 0;">6</div>
<div class="a" style="left:2px;top:410px;width:24px;height:1px;background:#dcdcdc"></div>
<div class="t" style="left:9.54px;top:421px;font-size:14.3px;color:#444;transform:scaleX(0.9200);transform-origin:0 0;">7</div>
<div class="a" style="left:2px;top:436px;width:24px;height:1px;background:#dcdcdc"></div>
<div class="t" style="left:9.54px;top:447px;font-size:14.3px;color:#444;transform:scaleX(0.9200);transform-origin:0 0;">8</div>
<div class="a" style="left:2px;top:462px;width:24px;height:1px;background:#dcdcdc"></div>
<div class="t" style="left:9.54px;top:473px;font-size:14.3px;color:#444;transform:scaleX(0.9200);transform-origin:0 0;">9</div>
<div class="a" style="left:2px;top:488px;width:24px;height:1px;background:#dcdcdc"></div>
<div class="t" style="left:7.01px;top:499px;font-size:14.3px;color:#444;transform:scaleX(0.8500);transform-origin:0 0;">10</div>
<div class="a" style="left:2px;top:514px;width:24px;height:1px;background:#dcdcdc"></div>
<div class="t" style="left:7.07px;top:525px;font-size:14.3px;color:#444;transform:scaleX(0.8500);transform-origin:0 0;">11</div>
<div class="a" style="left:2px;top:540px;width:24px;height:1px;background:#dcdcdc"></div>
<div class="t" style="left:7.08px;top:551px;font-size:14.3px;color:#444;transform:scaleX(0.8500);transform-origin:0 0;">12</div>
<div class="a" style="left:2px;top:566px;width:24px;height:1px;background:#dcdcdc"></div>
<div class="t" style="left:7.04px;top:577px;font-size:14.3px;color:#444;transform:scaleX(0.8500);transform-origin:0 0;">13</div>
<div class="a" style="left:2px;top:592px;width:24px;height:1px;background:#dcdcdc"></div>
<div class="t" style="left:6.96px;top:603px;font-size:14.3px;color:#444;transform:scaleX(0.8500);transform-origin:0 0;">14</div>
<div class="a" style="left:2px;top:618px;width:24px;height:1px;background:#dcdcdc"></div>
<div class="t" style="left:7.03px;top:629px;font-size:14.3px;color:#444;transform:scaleX(0.8500);transform-origin:0 0;">15</div>
<div class="a" style="left:2px;top:644px;width:24px;height:1px;background:#dcdcdc"></div>
<div class="t" style="left:7.04px;top:655px;font-size:14.3px;color:#444;transform:scaleX(0.8500);transform-origin:0 0;">16</div>
<div class="a" style="left:2px;top:670px;width:24px;height:1px;background:#dcdcdc"></div>
<div class="t" style="left:7.08px;top:681px;font-size:14.3px;color:#444;transform:scaleX(0.8500);transform-origin:0 0;">17</div>
<div class="a" style="left:2px;top:696px;width:24px;height:1px;background:#dcdcdc"></div>
<div class="t" style="left:7.04px;top:707px;font-size:14.3px;color:#444;transform:scaleX(0.8500);transform-origin:0 0;">18</div>
<div class="a" style="left:2px;top:722px;width:24px;height:1px;background:#dcdcdc"></div>
<div class="t" style="left:7.06px;top:733px;font-size:14.3px;color:#444;transform:scaleX(0.8500);transform-origin:0 0;">19</div>
<div class="a" style="left:2px;top:748px;width:24px;height:1px;background:#dcdcdc"></div>
<div class="t" style="left:7.17px;top:759px;font-size:14.3px;color:#444;transform:scaleX(0.8500);transform-origin:0 0;">20</div>
<div class="a" style="left:53px;top:226px;width:1104px;height:54px;background:#1f4e78"></div>
<div class="t" style="left:526.61px;top:242px;font-size:24.7px;color:#fff;transform:scaleX(1.1067);transform-origin:0 0;-webkit-text-stroke:0.5px #1f4e78;">Clarifications</div>
<div class="a" style="left:53px;top:279px;width:1104px;height:54px;background:#d9d9d9;border:1px solid #808080"></div>
<div class="t" style="left:86.27px;top:301px;font-size:13.6px;color:#000;transform:scaleX(1.0307);transform-origin:0 0;-webkit-text-stroke:0.1px #000;">Agency</div>
<div class="fb" style="left:148px"></div>
<div class="a" style="left:165px;top:279px;width:1px;height:54px;background:#808080"></div>
<div class="t" style="left:184.31px;top:301px;font-size:13.6px;color:#000;transform:scaleX(0.9599);transform-origin:0 0;-webkit-text-stroke:0.1px #000;">SOP #</div>
<div class="fb" style="left:225px"></div>
<div class="a" style="left:242px;top:279px;width:1px;height:54px;background:#808080"></div>
<div class="t" style="left:261.37px;top:301px;font-size:13.6px;color:#000;transform:scaleX(1.0560);transform-origin:0 0;-webkit-text-stroke:0.1px #000;">Clar. #</div>
<div class="fb" style="left:306px"></div>
<div class="a" style="left:323px;top:279px;width:1px;height:54px;background:#808080"></div>
<div class="t" style="left:387.52px;top:301px;font-size:13.6px;color:#000;transform:scaleX(1.1270);transform-origin:0 0;-webkit-text-stroke:0.1px #000;">Clarification</div>
<div class="fb" style="left:514px"></div>
<div class="a" style="left:531px;top:279px;width:1px;height:54px;background:#808080"></div>
<div class="t" style="left:632.17px;top:301px;font-size:13.6px;color:#000;transform:scaleX(1.0622);transform-origin:0 0;-webkit-text-stroke:0.1px #000;">Answer</div>
<div class="fb" style="left:763px"></div>
<div class="a" style="left:780px;top:279px;width:1px;height:54px;background:#808080"></div>
<div class="t" style="left:850.67px;top:301px;font-size:13.6px;color:#000;transform:scaleX(1.0547);transform-origin:0 0;-webkit-text-stroke:0.1px #000;">Comments</div>
<div class="fb" style="left:973px"></div>
<div class="a" style="left:990px;top:279px;width:1px;height:54px;background:#808080"></div>
<div class="t" style="left:1053.56px;top:301px;font-size:13.6px;color:#000;transform:scaleX(1.0442);transform-origin:0 0;-webkit-text-stroke:0.1px #000;">Status</div>
<div class="fb" style="left:1139px"></div>
<div class="a" style="left:54px;top:333px;width:111px;height:25px;background:#ffc7ce"></div>
<div class="a" style="left:991px;top:333px;width:165px;height:25px;background:#ffeb9c"></div>
<div class="t" style="left:67.56px;top:338px;font-size:14px;color:#9c0006;transform:scaleX(0.9042);transform-origin:0 0;">Dept of Trade</div>
<div class="t" style="left:180.12px;top:338px;font-size:14px;color:#000;transform:scaleX(0.8845);transform-origin:0 0;">00-0-000</div>
<div class="t" style="left:256.81px;top:338px;font-size:14px;color:#000;transform:scaleX(0.8954);transform-origin:0 0;">00-0-000</div>
<div class="t" style="left:337.89px;top:338px;font-size:14px;color:#000;transform:scaleX(0.9267);transform-origin:0 0;">Question 1</div>
<div class="t" style="left:546.18px;top:338px;font-size:14px;color:#000;transform:scaleX(0.9124);transform-origin:0 0;">Answer 1</div>
<div class="t" style="left:1067.17px;top:338px;font-size:14px;color:#9c6500;transform:scaleX(1.0678);transform-origin:0 0;">M</div>
<div class="a" style="left:53px;top:358px;width:1104px;height:1px;background:#808080"></div>
<div class="a" style="left:54px;top:359px;width:111px;height:25px;background:#ffc7ce"></div>
<div class="a" style="left:991px;top:359px;width:165px;height:25px;background:#ffc7ce"></div>
<div class="t" style="left:67.56px;top:364px;font-size:14px;color:#9c0006;transform:scaleX(0.9042);transform-origin:0 0;">Dept of Trade</div>
<div class="t" style="left:180.12px;top:364px;font-size:14px;color:#000;transform:scaleX(0.8867);transform-origin:0 0;">00-0-001</div>
<div class="t" style="left:256.81px;top:364px;font-size:14px;color:#000;transform:scaleX(0.8976);transform-origin:0 0;">00-0-001</div>
<div class="t" style="left:337.89px;top:364px;font-size:14px;color:#000;transform:scaleX(0.9270);transform-origin:0 0;">Question 2</div>
<div class="t" style="left:546.18px;top:364px;font-size:14px;color:#000;transform:scaleX(0.9128);transform-origin:0 0;">Answer 2</div>
<div class="t" style="left:1068.35px;top:364px;font-size:14px;color:#9c0006;transform:scaleX(0.9974);transform-origin:0 0;">H</div>
<div class="a" style="left:53px;top:384px;width:1104px;height:1px;background:#808080"></div>
<div class="a" style="left:54px;top:385px;width:111px;height:25px;background:#ffeb9c"></div>
<div class="a" style="left:991px;top:385px;width:165px;height:25px;background:#c6efce"></div>
<div class="t" style="left:67.54px;top:390px;font-size:14px;color:#9c6500;transform:scaleX(0.9241);transform-origin:0 0;">Dept of Finance</div>
<div class="t" style="left:180.11px;top:390px;font-size:14px;color:#000;transform:scaleX(0.8870);transform-origin:0 0;">00-0-002</div>
<div class="t" style="left:256.81px;top:390px;font-size:14px;color:#000;transform:scaleX(0.8980);transform-origin:0 0;">00-0-002</div>
<div class="t" style="left:337.89px;top:390px;font-size:14px;color:#000;transform:scaleX(0.9258);transform-origin:0 0;">Question 3</div>
<div class="t" style="left:546.18px;top:390px;font-size:14px;color:#000;transform:scaleX(0.9114);transform-origin:0 0;">Answer 3</div>
<div class="t" style="left:1069.21px;top:390px;font-size:14px;color:#006100;transform:scaleX(1.0368);transform-origin:0 0;">L</div>
<div class="a" style="left:53px;top:410px;width:1104px;height:1px;background:#808080"></div>
<div class="a" style="left:54px;top:411px;width:111px;height:25px;background:#ffc7ce"></div>
<div class="a" style="left:991px;top:411px;width:165px;height:25px;background:#ffeb9c"></div>
<div class="t" style="left:67.56px;top:416px;font-size:14px;color:#9c0006;transform:scaleX(0.9042);transform-origin:0 0;">Dept of Trade</div>
<div class="t" style="left:180.12px;top:416px;font-size:14px;color:#000;transform:scaleX(0.8856);transform-origin:0 0;">00-0-003</div>
<div class="t" style="left:256.81px;top:416px;font-size:14px;color:#000;transform:scaleX(0.8965);transform-origin:0 0;">00-0-003</div>
<div class="t" style="left:337.89px;top:416px;font-size:14px;color:#000;transform:scaleX(0.9229);transform-origin:0 0;">Question 4</div>
<div class="t" style="left:546.18px;top:416px;font-size:14px;color:#000;transform:scaleX(0.9081);transform-origin:0 0;">Answer 4</div>
<div class="t" style="left:1067.17px;top:416px;font-size:14px;color:#9c6500;transform:scaleX(1.0678);transform-origin:0 0;">M</div>
<div class="a" style="left:53px;top:436px;width:1104px;height:1px;background:#808080"></div>
<div class="a" style="left:54px;top:437px;width:111px;height:25px;background:#ffeb9c"></div>
<div class="a" style="left:991px;top:437px;width:165px;height:25px;background:#ffc7ce"></div>
<div class="t" style="left:67.54px;top:442px;font-size:14px;color:#9c6500;transform:scaleX(0.9241);transform-origin:0 0;">Dept of Finance</div>
<div class="t" style="left:180.12px;top:442px;font-size:14px;color:#000;transform:scaleX(0.8823);transform-origin:0 0;">00-0-004</div>
<div class="t" style="left:256.81px;top:442px;font-size:14px;color:#000;transform:scaleX(0.8932);transform-origin:0 0;">00-0-004</div>
<div class="t" style="left:337.89px;top:442px;font-size:14px;color:#000;transform:scaleX(0.9254);transform-origin:0 0;">Question 5</div>
<div class="t" style="left:546.18px;top:442px;font-size:14px;color:#000;transform:scaleX(0.9109);transform-origin:0 0;">Answer 5</div>
<div class="t" style="left:1068.35px;top:442px;font-size:14px;color:#9c0006;transform:scaleX(0.9974);transform-origin:0 0;">H</div>
<div class="a" style="left:53px;top:462px;width:1104px;height:1px;background:#808080"></div>
<div class="a" style="left:54px;top:463px;width:111px;height:25px;background:#ffc7ce"></div>
<div class="a" style="left:991px;top:463px;width:165px;height:25px;background:#c6efce"></div>
<div class="t" style="left:67.56px;top:468px;font-size:14px;color:#9c0006;transform:scaleX(0.9042);transform-origin:0 0;">Dept of Trade</div>
<div class="t" style="left:180.12px;top:468px;font-size:14px;color:#000;transform:scaleX(0.8851);transform-origin:0 0;">00-0-005</div>
<div class="t" style="left:256.81px;top:468px;font-size:14px;color:#000;transform:scaleX(0.8961);transform-origin:0 0;">00-0-005</div>
<div class="t" style="left:337.89px;top:468px;font-size:14px;color:#000;transform:scaleX(0.9267);transform-origin:0 0;">Question 1</div>
<div class="t" style="left:546.18px;top:468px;font-size:14px;color:#000;transform:scaleX(0.9124);transform-origin:0 0;">Answer 1</div>
<div class="t" style="left:1069.21px;top:468px;font-size:14px;color:#006100;transform:scaleX(1.0368);transform-origin:0 0;">L</div>
<div class="a" style="left:53px;top:488px;width:1104px;height:1px;background:#808080"></div>
<div class="a" style="left:54px;top:489px;width:111px;height:25px;background:#c6efce"></div>
<div class="a" style="left:991px;top:489px;width:165px;height:25px;background:#ffeb9c"></div>
<div class="t" style="left:67.55px;top:494px;font-size:14px;color:#006100;transform:scaleX(0.9184);transform-origin:0 0;">Dept of Marine</div>
<div class="t" style="left:180.12px;top:494px;font-size:14px;color:#000;transform:scaleX(0.8845);transform-origin:0 0;">00-0-000</div>
<div class="t" style="left:256.81px;top:494px;font-size:14px;color:#000;transform:scaleX(0.8954);transform-origin:0 0;">00-0-000</div>
<div class="t" style="left:337.89px;top:494px;font-size:14px;color:#000;transform:scaleX(0.9270);transform-origin:0 0;">Question 2</div>
<div class="t" style="left:546.18px;top:494px;font-size:14px;color:#000;transform:scaleX(0.9128);transform-origin:0 0;">Answer 2</div>
<div class="t" style="left:1067.17px;top:494px;font-size:14px;color:#9c6500;transform:scaleX(1.0678);transform-origin:0 0;">M</div>
<div class="a" style="left:53px;top:514px;width:1104px;height:1px;background:#808080"></div>
<div class="a" style="left:54px;top:515px;width:111px;height:25px;background:#ffeb9c"></div>
<div class="a" style="left:991px;top:515px;width:165px;height:25px;background:#ffc7ce"></div>
<div class="t" style="left:67.54px;top:520px;font-size:14px;color:#9c6500;transform:scaleX(0.9241);transform-origin:0 0;">Dept of Finance</div>
<div class="t" style="left:180.12px;top:520px;font-size:14px;color:#000;transform:scaleX(0.8867);transform-origin:0 0;">00-0-001</div>
<div class="t" style="left:256.81px;top:520px;font-size:14px;color:#000;transform:scaleX(0.8976);transform-origin:0 0;">00-0-001</div>
<div class="t" style="left:337.89px;top:520px;font-size:14px;color:#000;transform:scaleX(0.9258);transform-origin:0 0;">Question 3</div>
<div class="t" style="left:546.18px;top:520px;font-size:14px;color:#000;transform:scaleX(0.9114);transform-origin:0 0;">Answer 3</div>
<div class="t" style="left:1068.35px;top:520px;font-size:14px;color:#9c0006;transform:scaleX(0.9974);transform-origin:0 0;">H</div>
<div class="a" style="left:53px;top:540px;width:1104px;height:1px;background:#808080"></div>
<div class="a" style="left:54px;top:541px;width:111px;height:25px;background:#ffc7ce"></div>
<div class="a" style="left:991px;top:541px;width:165px;height:25px;background:#c6efce"></div>
<div class="t" style="left:67.56px;top:546px;font-size:14px;color:#9c0006;transform:scaleX(0.9042);transform-origin:0 0;">Dept of Trade</div>
<div class="t" style="left:180.11px;top:546px;font-size:14px;color:#000;transform:scaleX(0.8870);transform-origin:0 0;">00-0-002</div>
<div class="t" style="left:256.81px;top:546px;font-size:14px;color:#000;transform:scaleX(0.8980);transform-origin:0 0;">00-0-002</div>
<div class="t" style="left:337.89px;top:546px;font-size:14px;color:#000;transform:scaleX(0.9229);transform-origin:0 0;">Question 4</div>
<div class="t" style="left:546.18px;top:546px;font-size:14px;color:#000;transform:scaleX(0.9081);transform-origin:0 0;">Answer 4</div>
<div class="t" style="left:1069.21px;top:546px;font-size:14px;color:#006100;transform:scaleX(1.0368);transform-origin:0 0;">L</div>
<div class="a" style="left:53px;top:566px;width:1104px;height:1px;background:#808080"></div>
<div class="a" style="left:54px;top:567px;width:111px;height:25px;background:#ffeb9c"></div>
<div class="a" style="left:991px;top:567px;width:165px;height:25px;background:#ffeb9c"></div>
<div class="t" style="left:67.54px;top:572px;font-size:14px;color:#9c6500;transform:scaleX(0.9241);transform-origin:0 0;">Dept of Finance</div>
<div class="t" style="left:180.12px;top:572px;font-size:14px;color:#000;transform:scaleX(0.8856);transform-origin:0 0;">00-0-003</div>
<div class="t" style="left:256.81px;top:572px;font-size:14px;color:#000;transform:scaleX(0.8965);transform-origin:0 0;">00-0-003</div>
<div class="t" style="left:337.89px;top:572px;font-size:14px;color:#000;transform:scaleX(0.9254);transform-origin:0 0;">Question 5</div>
<div class="t" style="left:546.18px;top:572px;font-size:14px;color:#000;transform:scaleX(0.9109);transform-origin:0 0;">Answer 5</div>
<div class="t" style="left:1067.17px;top:572px;font-size:14px;color:#9c6500;transform:scaleX(1.0678);transform-origin:0 0;">M</div>
<div class="a" style="left:53px;top:592px;width:1104px;height:1px;background:#808080"></div>
<div class="a" style="left:54px;top:593px;width:111px;height:25px;background:#ffeb9c"></div>
<div class="a" style="left:991px;top:593px;width:165px;height:25px;background:#ffeb9c"></div>
<div class="t" style="left:67.54px;top:598px;font-size:14px;color:#9c6500;transform:scaleX(0.9241);transform-origin:0 0;">Dept of Finance</div>
<div class="t" style="left:180.12px;top:598px;font-size:14px;color:#000;transform:scaleX(0.8823);transform-origin:0 0;">00-0-004</div>
<div class="t" style="left:256.81px;top:598px;font-size:14px;color:#000;transform:scaleX(0.8932);transform-origin:0 0;">00-0-004</div>
<div class="t" style="left:337.89px;top:598px;font-size:14px;color:#000;transform:scaleX(0.9267);transform-origin:0 0;">Question 1</div>
<div class="t" style="left:546.18px;top:598px;font-size:14px;color:#000;transform:scaleX(0.9124);transform-origin:0 0;">Answer 1</div>
<div class="t" style="left:1067.17px;top:598px;font-size:14px;color:#9c6500;transform:scaleX(1.0678);transform-origin:0 0;">M</div>
<div class="a" style="left:53px;top:618px;width:1104px;height:1px;background:#808080"></div>
<div class="a" style="left:991px;top:619px;width:165px;height:25px;background:#ffc7ce"></div>
<div class="t" style="left:67.52px;top:624px;font-size:14px;color:#000;transform:scaleX(0.9108);transform-origin:0 0;">Internal</div>
<div class="t" style="left:180.12px;top:624px;font-size:14px;color:#000;transform:scaleX(0.8851);transform-origin:0 0;">00-0-005</div>
<div class="t" style="left:256.81px;top:624px;font-size:14px;color:#000;transform:scaleX(0.8961);transform-origin:0 0;">00-0-005</div>
<div class="t" style="left:337.89px;top:624px;font-size:14px;color:#000;transform:scaleX(0.9270);transform-origin:0 0;">Question 2</div>
<div class="t" style="left:546.18px;top:624px;font-size:14px;color:#000;transform:scaleX(0.9128);transform-origin:0 0;">Answer 2</div>
<div class="t" style="left:1068.35px;top:624px;font-size:14px;color:#9c0006;transform:scaleX(0.9974);transform-origin:0 0;">H</div>
<div class="a" style="left:53px;top:644px;width:1104px;height:1px;background:#808080"></div>
<div class="a" style="left:54px;top:645px;width:111px;height:25px;background:#c6efce"></div>
<div class="a" style="left:991px;top:645px;width:165px;height:25px;background:#c6efce"></div>
<div class="t" style="left:67.55px;top:650px;font-size:14px;color:#006100;transform:scaleX(0.9184);transform-origin:0 0;">Dept of Marine</div>
<div class="t" style="left:180.12px;top:650px;font-size:14px;color:#000;transform:scaleX(0.8845);transform-origin:0 0;">00-0-000</div>
<div class="t" style="left:256.81px;top:650px;font-size:14px;color:#000;transform:scaleX(0.8954);transform-origin:0 0;">00-0-000</div>
<div class="t" style="left:337.89px;top:650px;font-size:14px;color:#000;transform:scaleX(0.9258);transform-origin:0 0;">Question 3</div>
<div class="t" style="left:546.18px;top:650px;font-size:14px;color:#000;transform:scaleX(0.9114);transform-origin:0 0;">Answer 3</div>
<div class="t" style="left:1069.21px;top:650px;font-size:14px;color:#006100;transform:scaleX(1.0368);transform-origin:0 0;">L</div>
<div class="a" style="left:53px;top:670px;width:1104px;height:1px;background:#808080"></div>
<div class="a" style="left:54px;top:671px;width:111px;height:25px;background:#ffeb9c"></div>
<div class="a" style="left:991px;top:671px;width:165px;height:25px;background:#ffeb9c"></div>
<div class="t" style="left:67.54px;top:676px;font-size:14px;color:#9c6500;transform:scaleX(0.9241);transform-origin:0 0;">Dept of Finance</div>
<div class="t" style="left:180.12px;top:676px;font-size:14px;color:#000;transform:scaleX(0.8867);transform-origin:0 0;">00-0-001</div>
<div class="t" style="left:256.81px;top:676px;font-size:14px;color:#000;transform:scaleX(0.8976);transform-origin:0 0;">00-0-001</div>
<div class="t" style="left:337.89px;top:676px;font-size:14px;color:#000;transform:scaleX(0.9229);transform-origin:0 0;">Question 4</div>
<div class="t" style="left:546.18px;top:676px;font-size:14px;color:#000;transform:scaleX(0.9081);transform-origin:0 0;">Answer 4</div>
<div class="t" style="left:1067.17px;top:676px;font-size:14px;color:#9c6500;transform:scaleX(1.0678);transform-origin:0 0;">M</div>
<div class="a" style="left:53px;top:696px;width:1104px;height:1px;background:#808080"></div>
<div class="a" style="left:54px;top:697px;width:111px;height:25px;background:#ffc7ce"></div>
<div class="a" style="left:991px;top:697px;width:165px;height:25px;background:#ffc7ce"></div>
<div class="t" style="left:67.56px;top:702px;font-size:14px;color:#9c0006;transform:scaleX(0.9042);transform-origin:0 0;">Dept of Trade</div>
<div class="t" style="left:180.11px;top:702px;font-size:14px;color:#000;transform:scaleX(0.8870);transform-origin:0 0;">00-0-002</div>
<div class="t" style="left:256.81px;top:702px;font-size:14px;color:#000;transform:scaleX(0.8980);transform-origin:0 0;">00-0-002</div>
<div class="t" style="left:337.89px;top:702px;font-size:14px;color:#000;transform:scaleX(0.9254);transform-origin:0 0;">Question 5</div>
<div class="t" style="left:546.18px;top:702px;font-size:14px;color:#000;transform:scaleX(0.9109);transform-origin:0 0;">Answer 5</div>
<div class="t" style="left:1068.35px;top:702px;font-size:14px;color:#9c0006;transform:scaleX(0.9974);transform-origin:0 0;">H</div>
<div class="a" style="left:53px;top:722px;width:1104px;height:1px;background:#808080"></div>
<div class="a" style="left:53px;top:333px;width:1px;height:390px;background:#808080"></div>
<div class="a" style="left:165px;top:333px;width:1px;height:390px;background:#808080"></div>
<div class="a" style="left:242px;top:333px;width:1px;height:390px;background:#808080"></div>
<div class="a" style="left:323px;top:333px;width:1px;height:390px;background:#808080"></div>
<div class="a" style="left:531px;top:333px;width:1px;height:390px;background:#808080"></div>
<div class="a" style="left:780px;top:333px;width:1px;height:390px;background:#808080"></div>
<div class="a" style="left:990px;top:333px;width:1px;height:390px;background:#808080"></div>
<div class="a" style="left:1156px;top:333px;width:1px;height:390px;background:#808080"></div>
<div class="a" style="left:1330px;top:195px;width:15px;height:16px;border:1px solid #ababab;background:#fff"></div>
<svg class="a" style="left:1334px;top:200px" width="8" height="5"><path d="M0 4.5L3.75 0.5L7.5 4.5Z" fill="#666"/></svg>
<div class="a" style="left:1330px;top:210px;width:15px;height:520px;border:1px solid #ababab;background:#fff"></div>
<div class="a" style="left:1330px;top:730px;width:15px;height:29px;background:#f1eff1"></div>
<div class="a" style="left:1330px;top:758px;width:15px;height:15px;border:1px solid #ababab;background:#fff"></div>
<svg class="a" style="left:1334px;top:764px" width="8" height="5"><path d="M0 0.5H7.5L3.75 4.5Z" fill="#666"/></svg>
</div>
<div id="bottom">
<div class="a" style="left:1px;top:772px;width:1347px;height:28px;background:#f1eff1"></div>
<div class="a" style="left:1px;top:772px;width:1326px;height:1px;background:#ababab"></div>
<svg class="a" style="left:28px;top:782px" width="5" height="8"><path d="M4.5 0.5L0.5 4L4.5 7.5Z" fill="#c3c3c3"/></svg>
<svg class="a" style="left:57px;top:782px" width="5" height="8"><path d="M0.5 0.5L4.5 4L0.5 7.5Z" fill="#c3c3c3"/></svg>
<div class="a" style="left:101px;top:776px;width:1px;height:20px;background:#ababab"></div>
<div class="a" style="left:239px;top:776px;width:1px;height:20px;background:#ababab"></div>
<div class="a" style="left:104px;top:775px;width:133px;height:22px;background:#1f4e79"></div>
<div class="t" style="left:116.31px;top:779px;font-size:13px;color:#fff;transform:scaleX(1.0230);transform-origin:0 0;">Document Control</div>
<div class="a" style="left:242px;top:775px;width:98px;height:22px;background:#2e75b6"></div>
<div class="t" style="left:259.44px;top:779px;font-size:13px;color:#fff;transform:scaleX(0.9483);transform-origin:0 0;">SOP Team</div>
<div class="a" style="left:342px;top:772px;width:121px;height:25px;background:#fff;border-left:1px solid #ababab;border-right:1px solid #ababab"></div>
<div class="a" style="left:345px;top:778px;width:115px;height:16px;background:linear-gradient(#f3f3f2,#e2e4e0 45%,#d6dbd1 70%,#b4bfae)"></div>
<div class="a" style="left:342px;top:795px;width:121px;height:2px;background:#217346"></div>
<div class="t" style="left:361.87px;top:778px;font-size:14px;color:#217346;transform:scaleX(0.9161);transform-origin:0 0;font-weight:bold;">Clarifications</div>
<svg class="a" style="left:495px;top:777px" width="17" height="17" viewBox="0 0 17 17"><circle cx="8.5" cy="8.5" r="7.3" fill="none" stroke="#666" stroke-width="1.1"/><path d="M8.5 4.5V12.5M4.5 8.5H12.5" stroke="#555" stroke-width="1.6"/></svg>
<div class="a" style="left:1229px;top:782px;width:2px;height:2px;background:#b5b5b5"></div>
<div class="a" style="left:1229px;top:785px;width:2px;height:2px;background:#b5b5b5"></div>
<div class="a" style="left:1229px;top:788px;width:2px;height:2px;background:#b5b5b5"></div>
<div class="a" style="left:1245px;top:779px;width:15px;height:15px;background:#fff;border:1px solid #ababab"></div>
<svg class="a" style="left:1250px;top:783px" width="5" height="8"><path d="M4.5 0L0.5 4L4.5 8Z" fill="#555"/></svg>
<div class="a" style="left:1259px;top:779px;width:47px;height:15px;background:#fff;border:1px solid #ababab"></div>
<div class="a" style="left:1312px;top:779px;width:15px;height:15px;background:#fff;border:1px solid #ababab"></div>
<svg class="a" style="left:1317px;top:783px" width="5" height="8"><path d="M0.5 0L4.5 4L0.5 8Z" fill="#555"/></svg>
<div class="a" style="left:0;top:800px;width:1349px;height:23px;background:#217346"></div>
<div class="t" style="left:7.60px;top:806px;font-size:11.3px;color:#fff;transform:scaleX(0.8634);transform-origin:0 0;">READY</div>
<svg class="a" style="left:61px;top:804px" width="14" height="13" viewBox="0 0 14 13">
<rect x="2.5" y="3.5" width="10" height="9" fill="none" stroke="#fff" stroke-width="1"/>
<circle cx="3.2" cy="3" r="3" fill="#fff"/>
<rect x="7" y="5" width="5" height="2" fill="#fff"/>
<path d="M4 9.5h8M4 11.5h8M6.5 8v4M9.5 8v4" stroke="#fff" stroke-width="0.8" stroke-dasharray="1.4 0.8"/>
</svg>
<div class="a" style="left:1045px;top:800px;width:38px;height:23px;background:#185c37"></div>
<svg class="a" style="left:1057px;top:804px" width="13" height="13" viewBox="0 0 13 13"><rect x="0.5" y="0.5" width="12" height="12" fill="none" stroke="#fff"/><path d="M4.5 0V13M8.5 0V13M0 4.5H13M0 8.5H13" stroke="#fff"/></svg>
<svg class="a" style="left:1095px;top:804px" width="14" height="13" viewBox="0 0 14 13"><rect x="0.5" y="0.5" width="13" height="12" fill="none" stroke="#fff"/><rect x="3.5" y="2.5" width="7" height="8" fill="none" stroke="#fff"/><path d="M5 5.5h4M5 7.5h4" stroke="#fff"/></svg>
<svg class="a" style="left:1133px;top:804px" width="14" height="13" viewBox="0 0 14 13"><rect x="0.5" y="0.5" width="13" height="12" fill="none" stroke="#fff"/><rect x="3" y="1" width="3" height="5.5" fill="#fff"/><rect x="8" y="1" width="3" height="5.5" fill="#fff"/></svg>
<div class="a" style="left:1164px;top:809px;width:6px;height:2px;background:#fff"></div>
<div class="a" style="left:1174px;top:810px;width:100px;height:1px;background:#fff"></div>
<div class="a" style="left:1222px;top:805px;width:4px;height:11px;background:#fff"></div>
<div class="a" style="left:1278px;top:809px;width:8px;height:2px;background:#fff"></div>
<div class="a" style="left:1281px;top:806px;width:2px;height:8px;background:#fff"></div>
<div class="t" style="left:1302.19px;top:805px;font-size:11.4px;color:#fff;transform:scaleX(0.9325);transform-origin:0 0;">100%</div>
</div>
</body></html>
